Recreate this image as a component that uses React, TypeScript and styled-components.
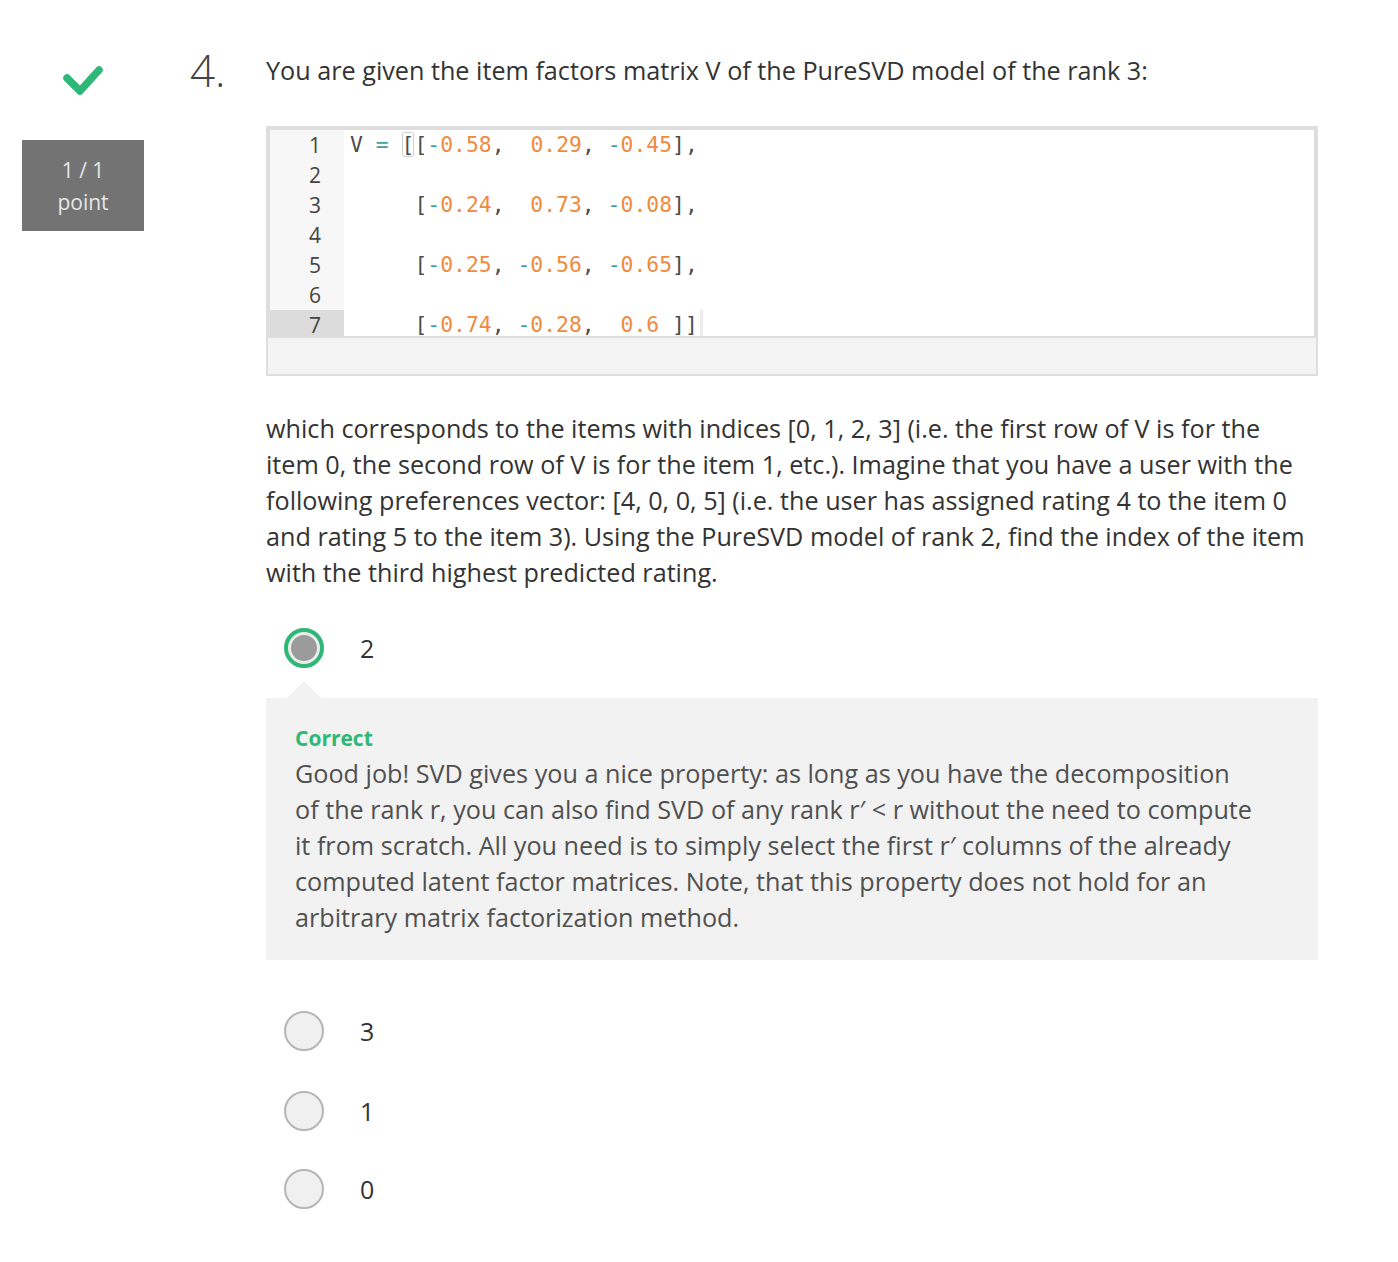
import React from "react";
import styled, { createGlobalStyle } from "styled-components";

const Global = createGlobalStyle`
  html, body { margin: 0; padding: 0; background: #fff; }
  body { font-family: "Open Sans", "Noto Sans", sans-serif; color: #333; }
`;

const GREEN = "#2fb777";

const Page = styled.div`
  display: flex;
  padding-top: 50px;
  width: 1398px;
  box-sizing: border-box;
`;

const LeftCol = styled.div`
  width: 190px;
  padding-left: 22px;
  box-sizing: border-box;
  display: flex;
  flex-direction: column;
  align-items: flex-start;
`;

const CheckWrap = styled.div`
  width: 122px;
  height: 90px;
  display: flex;
  justify-content: center;
  padding-top: 12px;
  box-sizing: border-box;
`;

const Badge = styled.div`
  width: 122px;
  height: 91px;
  background: #737373;
  color: #e6e6e6;
  font-size: 21px;
  line-height: 32px;
  display: flex;
  flex-direction: column;
  align-items: center;
  justify-content: center;
`;

const Number = styled.div`
  width: 76px;
  font-size: 44px;
  font-weight: 300;
  line-height: 36px;
  color: #444;
  height: 36px;
  margin-top: 2px;
`;

const Body = styled.div`
  width: 1052px;
`;

const Title = styled.p`
  margin: 2px 0 38px;
  font-size: 25.2px;
  line-height: 36px;
  color: #333;
`;

const CodeFrame = styled.div`
  border: 2px solid #dedede;
  background: #f4f4f4;
  height: 246px;
`;

const Editor = styled.div`
  border: 2px solid #dedede;
  background: #fff;
  height: 206px;
  overflow: hidden;
  display: flex;
`;

const Gutter = styled.div`
  width: 74px;
  background: #f7f7f7;
  display: flex;
  flex-direction: column;
`;

const LineNo = styled.div<{ $active?: boolean }>`
  height: 30px;
  line-height: 30px;
  text-align: right;
  padding-right: 23px;
  font-size: 21px;
  color: #444;
  flex-shrink: 0;
  background: ${(p) => (p.$active ? "#dcdcdc" : "transparent")};
`;

const CodeArea = styled.div`
  padding-left: 6px;
  display: flex;
  flex-direction: column;
`;

const CodeLine = styled.div`
  height: 30px;
  line-height: 30px;
  font-family: "DejaVu Sans Mono", "Liberation Mono", monospace;
  font-size: 21.4px;
  white-space: pre;
  color: #4d4d4d;
  flex-shrink: 0;
`;

const Tok = styled.span<{ $kind: "num" | "op" | "txt" }>`
  color: ${(p) =>
    p.$kind === "num" ? "#f08a3c" : p.$kind === "op" ? "#3f9e9e" : "#4d4d4d"};
`;

const Match = styled.span`
  outline: 1px solid #cfcfcf;
  outline-offset: -1px;
  border-radius: 3px;
  color: #4d4d4d;
`;

const Caret = styled.span`
  display: inline-block;
  width: 3px;
  height: 30px;
  vertical-align: top;
  margin-left: 2px;
  background: #ececec;
`;

const Para = styled.p`
  margin: 34px 0 38px;
  font-size: 25.2px;
  line-height: 36px;
  color: #333;
`;

const Option = styled.div`
  display: flex;
  align-items: center;
  height: 40px;
  padding-left: 18px;
  gap: 36px;
  font-size: 25px;
  color: #333;
`;

const Radio = styled.span<{ $checked?: boolean }>`
  width: 40px;
  height: 40px;
  box-sizing: border-box;
  border-radius: 50%;
  flex-shrink: 0;
  display: flex;
  align-items: center;
  justify-content: center;
  border: ${(p) => (p.$checked ? `4px solid ${GREEN}` : "2px solid #b5b5b5")};
  background: ${(p) => (p.$checked ? "#ececec" : "#f0f0f0")};
`;

const Dot = styled.span`
  width: 26px;
  height: 26px;
  border-radius: 50%;
  background: #9b9b9b;
`;

const Feedback = styled.div`
  position: relative;
  margin-top: 30px;
  background: #f2f2f2;
  padding: 24px 66px 25px 29px;
  &::before {
    content: "";
    position: absolute;
    left: 21px;
    top: -17px;
    border-left: 17px solid transparent;
    border-right: 17px solid transparent;
    border-bottom: 17px solid #f2f2f2;
  }
`;

const FbTitle = styled.div`
  color: ${GREEN};
  font-weight: 700;
  font-size: 21px;
  line-height: 32px;
`;

const FbText = styled.div`
  font-size: 25.2px;
  line-height: 36px;
  color: #505050;
  margin-top: 1px;
`;

const OtherOptions = styled.div`
  display: flex;
  flex-direction: column;
  margin-top: 51px;
  & > * + * { margin-top: 40px; }
  & > *:last-child { margin-top: 38px; }
`;

function tokenize(s: string) {
  const parts = s.split(/(\d+\.\d+|-|=)/).filter((x) => x !== "");
  return parts.map((p, i) => {
    const kind = /^\d+\.\d+$/.test(p) ? "num" : p === "-" || p === "=" ? "op" : "txt";
    return (
      <Tok key={i} $kind={kind}>
        {p}
      </Tok>
    );
  });
}

const lines: (string | null)[] = [
  null,
  "",
  "     [-0.24,  0.73, -0.08],",
  "",
  "     [-0.25, -0.56, -0.65],",
  "",
  "     [-0.74, -0.28,  0.6 ]]",
];

export default function App() {
  return (
    <>
      <Global />
      <Page>
        <LeftCol>
          <CheckWrap>
            <svg width="44" height="36" viewBox="0 0 44 36">
              <path
                d="M6 16 L19 29 L38 8"
                fill="none"
                stroke={GREEN}
                strokeWidth="7.5"
                strokeLinecap="round"
                strokeLinejoin="round"
              />
            </svg>
          </CheckWrap>
          <Badge>
            <span>1 / 1</span>
            <span>point</span>
          </Badge>
        </LeftCol>
        <Number>4.</Number>
        <Body>
          <Title>You are given the item factors matrix V of the PureSVD model of the rank 3:</Title>
          <CodeFrame>
            <Editor>
              <Gutter>
                {[1, 2, 3, 4, 5, 6, 7].map((n) => (
                  <LineNo key={n} $active={n === 7}>
                    {n}
                  </LineNo>
                ))}
              </Gutter>
              <CodeArea>
                {lines.map((l, i) =>
                  l === null ? (
                    <CodeLine key={i}>
                      {tokenize("V = ")}
                      <Match>[</Match>
                      {tokenize("[-0.58,  0.29, -0.45],")}
                    </CodeLine>
                  ) : (
                    <CodeLine key={i}>
                      {tokenize(l)}
                      {i === 6 && <Caret />}
                    </CodeLine>
                  )
                )}
              </CodeArea>
            </Editor>
          </CodeFrame>
          <Para>
            which corresponds to the items with indices [0, 1, 2, 3] (i.e. the first row of V is for the
            item 0, the second row of V is for the item 1, etc.). Imagine that you have a user with the
            following preferences vector: [4, 0, 0, 5] (i.e. the user has assigned rating 4 to the item 0
            and rating 5 to the item 3). Using the PureSVD model of rank 2, find the index of the item
            with the third highest predicted rating.
          </Para>
          <Option>
            <Radio $checked>
              <Dot />
            </Radio>
            <span>2</span>
          </Option>
          <Feedback>
            <FbTitle>Correct</FbTitle>
            <FbText>
              Good job! SVD gives you a nice property: as long as you have the decomposition of the rank
              r, you can also find SVD of any rank r′ &lt; r without the need to compute it from scratch.
              All you need is to simply select the first r′ columns of the already computed latent factor
              matrices. Note, that this property does not hold for an arbitrary matrix factorization
              method.
            </FbText>
          </Feedback>
          <OtherOptions>
            <Option>
              <Radio />
              <span>3</span>
            </Option>
            <Option>
              <Radio />
              <span>1</span>
            </Option>
            <Option>
              <Radio />
              <span>0</span>
            </Option>
          </OtherOptions>
        </Body>
      </Page>
    </>
  );
}
